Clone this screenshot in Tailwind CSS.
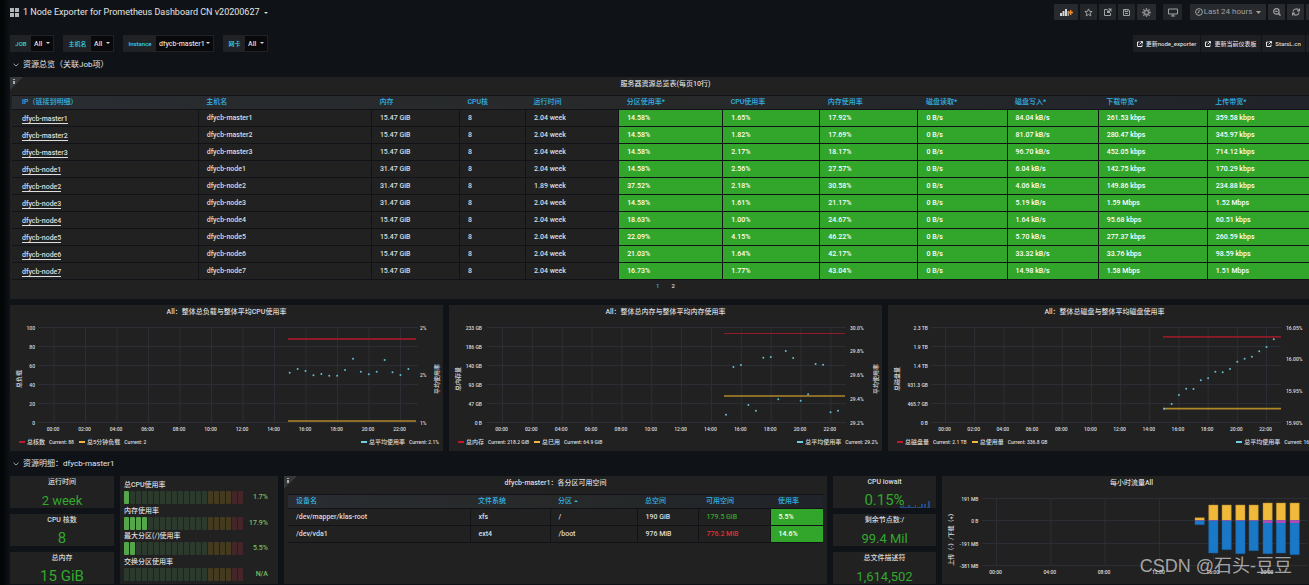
<!DOCTYPE html>
<html lang="zh-CN">
<head>
<meta charset="utf-8">
<title>1 Node Exporter for Prometheus Dashboard CN v20200627</title>
<script src="https://cdn.jsdelivr.net/npm/@tailwindcss/browser@4"></script>
</head>
<body class="overflow-hidden bg-[#0f1318] font-['Roboto','Noto_Sans_CJK_SC',sans-serif] text-[7px] leading-none text-[#dcdddf]">
<div class="-mr-3 min-h-screen bg-linear-to-r from-[#020405] to-[#0f1318] to-[10px] pl-[10px]">

  <!-- Top navigation -->
  <header class="flex h-6 items-center justify-between pr-1">
    <div class="flex items-center gap-1 pt-px">
      <svg class="size-[9px]" viewBox="0 0 9 9" fill="#b4b7ba" aria-hidden="true"><path d="M0 0h4v4H0zM5 0h4v4H5zM0 5h4v4H0zM5 5h4v4H5z"/></svg>
      <button class="flex items-center gap-1 text-[9px] text-[#e3e4e6]"><span>1 Node Exporter for Prometheus Dashboard CN v20200627</span>
        <svg class="h-[2px] w-1" viewBox="0 0 4 2" fill="#d8d9da" aria-hidden="true"><path d="M0 0h4L2 2z"/></svg></button>
    </div>
    <nav class="flex h-4 items-stretch gap-[7px] text-[#9fa1a3]" aria-label="Dashboard actions">
      <div class="flex gap-[2px]">
        <button aria-label="Add panel" class="flex w-6 items-center justify-center rounded-[1px] bg-[#282a2d]"><svg class="h-[9px] w-[14px]" viewBox="0 0 14 9"><path fill="#d5d6d7" d="M1 5h2v3H1zM3.500 3h2v5h-2zM6 1h2v7H6z"/><path fill="#9b9da0" d="M8.500 3h1.500v5H8.500z"/><path fill="#f08a24" d="M9.300 3.700h1.600V2h1.500v1.700H14v1.500h-1.600V7h-1.500V5.200H9.300z"/></svg></button>
        <button aria-label="Star" class="flex w-[17px] items-center justify-center rounded-[1px] bg-[#232629]"><svg class="size-[9px]" viewBox="0 0 9 9" fill="none" stroke="currentColor"><path d="M4.500 .9l1 2.400 2.600.2-2 1.700.7 2.700-2.300-1.400-2.300 1.400.7-2.700-2-1.700 2.600-.2z"/></svg></button>
        <button aria-label="Share" class="flex w-[17px] items-center justify-center rounded-[1px] bg-[#232629]"><svg class="size-[9px]" viewBox="0 0 9 9" fill="none" stroke="currentColor"><path d="M4.500 1.500h-3v6h6V5"/><path fill="currentColor" stroke="none" d="M5 .5h3.500V4z"/><path fill="currentColor" stroke="none" d="M4 2.500h3v2.500H4z"/></svg></button>
        <button aria-label="Save" class="flex w-[17px] items-center justify-center rounded-[1px] bg-[#232629]"><svg class="size-[9px]" viewBox="0 0 9 9" fill="none" stroke="currentColor"><path d="M1.500 1.500h5l1 1v5h-6z"/><path d="M3 1.500v2h3v-2M3 5.500h3"/></svg></button>
        <button aria-label="Settings" class="flex w-[19px] items-center justify-center rounded-[1px] bg-[#282a2d]"><svg class="size-[9px]" viewBox="0 0 9 9" fill="none" stroke="#85878a"><circle cx="4.500" cy="4.500" r="2.200" stroke-width="1.800"/><path stroke-width="1.300" d="M4.500 0v2M4.500 7v2M0 4.500h2M7 4.500h2M1.300 1.300l1.400 1.400M6.300 6.300l1.400 1.400M1.300 7.700l1.400-1.400M6.300 2.700l1.400-1.400"/></svg></button>
      </div>
      <button aria-label="Cycle view mode" class="flex w-[19px] items-center justify-center rounded-[1px] bg-[#232629]"><svg class="h-[9px] w-[10px]" viewBox="0 0 10 9" fill="none" stroke="currentColor"><path d="M.5 1h9v5h-9zM5 6v2M3 8h4"/></svg></button>
      <div class="ml-px flex gap-[2px]">
        <button class="flex w-[76px] items-center justify-center gap-[1px] rounded-[1px] bg-[#282a2d] text-[8px]"><svg class="size-[8px]" viewBox="0 0 8 8" fill="none" stroke="currentColor"><circle cx="4" cy="4" r="3.400"/><path d="M4 2v2.200l-1.500.8"/></svg><span class="whitespace-nowrap">Last 24 hours</span><svg class="ml-[3px] h-[3px] w-[5px]" viewBox="0 0 5 3" fill="currentColor"><path d="M0 0h5L2.500 3z"/></svg></button>
        <button aria-label="Zoom out" class="flex w-[17px] items-center justify-center rounded-[1px] bg-[#282a2d]"><svg class="size-[8px]" viewBox="0 0 8 8" fill="none" stroke="currentColor" stroke-width="1.200"><circle cx="3.400" cy="3.400" r="2.700"/><path d="M2.200 3.400h2.400"/><path stroke-width="1.500" d="M5.400 5.400L7.500 7.500"/></svg></button>
        <button aria-label="Refresh" class="flex w-[17px] items-center justify-center rounded-[1px] bg-[#282a2d]"><svg class="size-[8px]" viewBox="0 0 8 8" fill="none" stroke="currentColor" stroke-width="1.200"><path d="M1 3.500C1.500 .5 5.500.2 6.800 2.500M7.500.5v2.500H5M7 4.500C6.500 7.500 2.500 7.800 1.200 5.500M.5 7.500V5H3"/></svg></button>
        <button aria-label="Refresh interval" class="w-[11px] rounded-[1px] bg-[#282a2d]"></button>
      </div>
    </nav>
  </header>

  <!-- Template variables and links -->
  <section class="flex items-center justify-between pt-[11px] text-[7px]">
    <div class="flex h-[17px] gap-[9px] font-medium" id="vars"></div>
    <nav class="flex h-[17px] gap-px text-[6px] font-medium" id="links" aria-label="Links"></nav>
  </section>

  <h2 class="flex h-[25px] items-center text-[8px] text-[#e3e4e6]"><button class="flex items-center gap-1"><svg class="ml-[3px] h-1 w-[6px]" viewBox="0 0 6 4" fill="none" stroke="#9fa1a3"><path d="M.5.8L3 3 5.500.8"/></svg>资源总览（关联Job项）</button></h2>

  <!-- Server overview table -->
  <section class="relative bg-[#212121] px-[2px] pb-[10px]">
    <svg class="absolute top-0 left-0 size-[13px]" viewBox="0 0 13 13" aria-hidden="true"><path fill="#36383a" d="M0 0h13L0 13z"/><path fill="#a9abad" d="M3 2h2v1H3zM3 4h2v3H3z"/></svg>
    <h3 class="flex h-[18px] items-center justify-center pb-1 font-medium">服务器资源总览表(每页10行)</h3>
    <table class="w-full table-fixed border-collapse" id="servers"></table>
    <nav class="flex h-[9px] items-end justify-center gap-3 text-[6px] font-medium" aria-label="Pages"><a href="#" class="text-[#33b5e5]">1</a><a href="#">2</a></nav>
  </section>

  <!-- Overall graphs -->
  <section class="mt-[6px] grid grid-cols-3 gap-[6px]" id="graphs"></section>

  <h2 class="flex h-[25px] items-center text-[8px] text-[#e3e4e6]"><button class="flex items-center gap-1"><svg class="ml-[3px] h-1 w-[6px]" viewBox="0 0 6 4" fill="none" stroke="#9fa1a3"><path d="M.5.8L3 3 5.500.8"/></svg>资源明细：dfycb-master1</button></h2>

  <!-- Host detail -->
  <section class="grid grid-cols-[104fr_158fr_543fr_103fr_379fr] gap-[6px]">
    <div class="flex flex-col gap-[6px] text-center text-[#32a82c]">
      <div class="h-8 bg-[#212121] pt-[3px]"><h3 class="font-medium text-[#dcdddf]">运行时间</h3><p class="pt-[8px] text-[13px]">2 week</p></div>
      <div class="h-8 bg-[#212121] pt-[3px]"><h3 class="font-medium text-[#dcdddf]">CPU 核数</h3><p class="pt-[7px] text-[15px]">8</p></div>
      <div class="h-8 bg-[#212121] pt-[3px]"><h3 class="font-medium text-[#dcdddf]">总内存</h3><p class="pt-[7px] text-[15px]">15 GiB</p></div>
    </div>
    <div class="flex flex-col justify-between bg-[#212121] px-1 pt-[6px] pb-[3px]" id="gauges"></div>
    <div class="relative bg-[#212121] px-1">
      <svg class="absolute top-0 left-0 size-[13px]" viewBox="0 0 13 13" aria-hidden="true"><path fill="#36383a" d="M0 0h13L0 13z"/><path fill="#a9abad" d="M3 2h2v1H3zM3 4h2v3H3z"/></svg>
      <h3 class="flex h-[18px] items-center justify-center pb-1 font-medium">dfycb-master1：各分区可用空间</h3>
      <table class="w-full table-fixed border-collapse" id="disks"></table>
    </div>
    <div class="flex flex-col gap-[6px] text-center text-[#32a82c]">
      <div class="relative h-8 bg-[#212121] pt-[3px]">
        <svg class="absolute right-1 bottom-0 h-[8px] w-8" viewBox="0 0 32 8" fill="#214a86" aria-hidden="true"><path d="M0 8V6h2v1h1V5h1v2h4V5h2v2h5V5h1v3h1V7h4V4h2v4h1V4h2v4h1V7h1V1h2v7z"/></svg>
        <h3 class="font-medium text-[#dcdddf]">CPU iowait</h3><p class="relative pt-[7px] text-[15px]">0.15%</p></div>
      <div class="h-8 bg-[#212121] pt-[3px]"><h3 class="font-medium text-[#dcdddf]">剩余节点数:/</h3><p class="pt-[8px] text-[13px]">99.4 Mil</p></div>
      <div class="h-8 bg-[#212121] pt-[3px]"><h3 class="font-medium text-[#dcdddf]">总文件描述符</h3><p class="pt-[8px] text-[13px]">1,614,502</p></div>
    </div>
    <div class="bg-[#212121]">
      <h3 class="flex h-[14px] items-center justify-center font-medium">每小时流量All</h3>
      <div id="traffic"></div>
    </div>
  </section>
</div>
<div class="pointer-events-none absolute right-[17px] bottom-[10px] font-['Liberation_Sans','Noto_Sans_CJK_SC',sans-serif] text-[18px] text-[#c8c8c8]/80">CSDN @石头-豆豆</div>

<script>
const $ = id => document.getElementById(id);

$('vars').innerHTML = [['JOB','All','w-5','w-[22px]'],['主机名','All','w-[27px]','w-[22px]'],['Instance','dfycb-master1','w-8','w-[57px]'],['网卡','All','w-[21px]','w-[22px]']]
  .map(([l,v,a,b],i) => `<div class="flex border border-[#202226]"><label for="v${i}" class="${a} flex items-center justify-center bg-[#202226] text-[6px] text-[#33d6e5]">${l}</label><div class="${b} relative flex bg-[#09090b]"><select id="v${i}" class="w-full appearance-none pt-[2px] pl-[3px] text-[7px] outline-none"><option>${v}</option></select><svg class="pointer-events-none absolute top-[6px] right-[3px] h-[2px] w-1" viewBox="0 0 4 2" fill="#d8d9da"><path d="M0 0h4L2 2z"/></svg></div></div>`).join('');

$('links').innerHTML = [['更新node_exporter','w-[67px]'],['更新当前仪表板','w-[60px]'],['StarsL.cn','w-[43px]'],['','w-[15px]']]
  .map(([t,w]) => `<a href="#" class="${w} flex items-center justify-center gap-[3px] whitespace-nowrap bg-[#1d1f22]">${t ? '<svg class="size-[6px] shrink-0" viewBox="0 0 6 6" fill="none" stroke="#e3e4e6"><path d="M2.500 1H.5v4.500H5V3.500M2.500 3.500L5 1M3.500.5h2v2"/></svg>' : ''}${t}</a>`).join('');

function table(id, widths, heads, rows, cell) {
  const sum = widths.reduce((a, b) => a + b);
  $(id).innerHTML = `<colgroup>${widths.map(w => `<col style="width:${w / sum * 100}%">`).join('')}</colgroup>
  <thead><tr class="h-[14px] border-y border-[#111318] bg-linear-to-r from-[#292c31] via-[#272929] to-[#20242a] text-left text-[#33b5e5]">${heads.map(h => `<th scope="col" class="p-0 pl-2 font-medium">${h}</th>`).join('')}</tr></thead>
  <tbody>${rows.map(r => `<tr class="h-[17px] border-b border-[#111318]">${r.map(cell).join('')}</tr>`).join('')}</tbody>`;
}
const raw = `dfycb-master1|15.47 GiB|2.04 week|14.58%|1.65%|17.92%|84.04 kB/s|261.53 kbps|359.58 kbps
dfycb-master2|15.47 GiB|2.04 week|14.58%|1.82%|17.69%|81.07 kB/s|280.47 kbps|345.97 kbps
dfycb-master3|15.47 GiB|2.04 week|14.58%|2.17%|18.17%|96.70 kB/s|452.05 kbps|714.12 kbps
dfycb-node1|31.47 GiB|2.04 week|14.58%|2.56%|27.57%|6.04 kB/s|142.75 kbps|170.29 kbps
dfycb-node2|31.47 GiB|1.89 week|37.52%|2.18%|30.58%|4.06 kB/s|149.86 kbps|234.88 kbps
dfycb-node3|31.47 GiB|2.04 week|14.58%|1.61%|21.17%|5.19 kB/s|1.59 Mbps|1.52 Mbps
dfycb-node4|15.47 GiB|2.04 week|18.63%|1.00%|24.67%|1.64 kB/s|95.68 kbps|60.51 kbps
dfycb-node5|15.47 GiB|2.04 week|22.09%|4.15%|46.22%|5.70 kB/s|277.37 kbps|260.59 kbps
dfycb-node6|15.47 GiB|2.04 week|21.03%|1.64%|42.17%|33.32 kB/s|33.76 kbps|98.59 kbps
dfycb-node7|15.47 GiB|2.04 week|16.73%|1.77%|43.04%|14.98 kB/s|1.58 Mbps|1.51 Mbps`;
const rows = raw.split('\n').map(l => { const c = l.split('|'); return [c[0], c[0], c[1], '8', c[2], c[3], c[4], c[5], '0 B/s', c[6], c[7], c[8]]; });
table('servers', [186,173,88,66,93,104,97,98,89,91,109,111],
  ['<span class="pl-[2px]">IP（链接到明细）</span>','主机名','内存','CPU核','运行时间','分区使用率*','CPU使用率','内存使用率','磁盘读取*','磁盘写入*','下载带宽*','上传带宽*'], rows,
  (v, i) => i === 0 ? `<td class="border-r border-[#111318] p-0 pt-[2px] pl-[10px]"><a href="#" class="border-b border-[#dcdddf] font-medium">${v}</a></td>`
    : i < 5 ? `<td class="border-r border-[#111318] p-0 pl-2 font-medium">${v}</td>`
    : `<td class="border-r border-[#111318] bg-[#32a62a] p-0 pl-2 font-medium text-white">${v}</td>`);
table('disks', [182,80,87,61,72,53], ['设备名','文件系统','分区 <svg class="inline h-[2px] w-1 align-middle" viewBox="0 0 4 2" fill="#33b5e5"><path d="M0 2h4L2 0z"/></svg>','总空间','可用空间','使用率'],
  [['/dev/mapper/klas-root','xfs','/','190 GiB','179.5 GiB','5.5%'],['/dev/vda1','ext4','/boot','976 MiB','776.2 MiB','14.6%']],
  (v, i) => i === 5 ? `<td class="bg-[#32a62a] p-0 pl-2 font-medium text-white">${v}</td>`
    : i === 4 ? `<td class="border-r border-[#111318] p-0 pl-2 font-medium ${v[0] === '1' ? 'text-[#32a62a]' : 'text-[#e02f2f]'}">${v}</td>`
    : `<td class="border-r border-[#111318] p-0 pl-2 font-medium">${v}</td>`);

const bar = (n, lit) => n < lit ? 'bg-[#55a64b]' : n < 14 ? 'bg-[#2c3a2d]' : n < 18 ? 'bg-[#433a20]' : 'bg-[#452628]';
$('gauges').innerHTML = [['总CPU使用率','1.7%',1],['内存使用率','17.9%',4],['最大分区(/)使用率','5.5%',2],['交换分区使用率','N/A',0]]
  .map(([t, v, lit]) => `<div><h3 class="font-medium">${t}</h3><div class="mt-[2px] flex h-[13px] items-center"><div class="flex h-full flex-1 gap-px">${Array.from({length: 20}, (_, n) => `<i class="flex-1 rounded-[1px] ${bar(n, lit)}"></i>`).join('')}</div><span class="w-[31px] pr-[6px] text-right font-medium text-[#73bf69]">${v}</span></div></div>`).join('');

const txt = (x, y, s, anchor, size = 5) => `<text x="${x}" y="${y}" text-anchor="${anchor}" dominant-baseline="central" font-size="${size}">${s}</text>`;
const vert = (x, y, s) => `<text transform="translate(${x} ${y}) rotate(-90)" text-anchor="middle" dominant-baseline="central" font-size="6">${s}</text>`;
function plot(c) {
  let s = `<svg class="block h-auto w-full font-medium" viewBox="0 0 ${c.w} ${c.h}" fill="#dcdddf" role="img" aria-label="${c.title}"><g stroke="#2b2f35">`;
  c.gy.forEach(y => s += `<path d="M${c.x0} ${y}H${c.x1}"/>`);
  c.times.forEach((t, i) => s += `<path d="M${c.gx + c.step * i} ${c.gy[0]}V${c.gy[c.gy.length - 1]}"/>`);
  s += '</g>';
  c.left.forEach((l, i) => s += txt(c.lx, c.gy[i], l, 'end'));
  (c.right || []).forEach((l, i) => s += txt(c.rx, c.gy[0] + i * 95 / (c.right.length - 1), l, 'start'));
  c.times.forEach((t, i) => s += txt(c.gx + c.step * i - 1, c.ty, t, 'middle'));
  s += vert(8, c.ly, c.lt) + (c.rt ? vert(426, 59, c.rt) : '');
  return s + (c.marks || '') + '</svg>';
}
const hours = [0,2,4,6,8,10,12,14,16,18,20,22].map(h => String(h).padStart(2, '0') + ':00');
const gy = [7.5,26.5,45.5,64.5,83.5,102.5];
const series = g => `<path stroke="#8f1a28" stroke-width="${g.rw}" d="M${g.s0} ${g.red}H${g.s1}"/><path stroke="#b0872b" stroke-width="1.700" d="M${g.s0} ${g.yel}H${g.s1}"/>` + g.pts.map((y, i) => `<circle cx="${g.p0 + g.ps * i}" cy="${y}" r="1" fill="#65bdd0"/>`).join('');
$('graphs').innerHTML = [
 {title:'All：整体总负载与整体平均CPU使用率', left:[100,80,60,40,20,0], right:['2%','2%','1%'], lt:'总负载', x0:28, x1:408, gx:44, step:31.5, lx:25, rx:410,
  rw:1.8, s0:278, s1:406, red:19, yel:101, p0:279.7, ps:7.91, pts:[52.7,49,51,55.3,54,55.7,55.7,50,38.7,51.7,54.3,51.7,40,52.3,55,49], leg:[['总核数','88'],['总5分钟负载','2'],['总平均使用率','2.1%']]},
 {title:'All：整体总内存与整体平均内存使用率', left:['233 GB','186 GB','140 GB','93 GB','47 GB','0 B'], right:['30.0%','29.8%','29.6%','29.4%','29.2%'], lt:'总内存量', x0:38, x1:397, gx:53.5, step:29.85, lx:33, rx:401,
  rw:1, s0:275, s1:396, red:13.5, yel:76, p0:277, ps:7.467, pts:[94.7,47,45,85,90.7,37.7,37,79.3,31,38,80.7,74.3,44,44.7,92.3,90.7], leg:[['总内存','218.2 GiB'],['总已用','64.9 GiB'],['总平均使用率','29.2%']]},
 {title:'All：整体总磁盘与整体平均磁盘使用率', left:['2.3 TB','1.9 TB','1.4 TB','931.3 GB','465.7 GB','0 B'], right:['16.05%','16.00%','15.95%','15.90%'], lt:'总磁盘量', x0:43, x1:393, gx:57.5, step:29.18, lx:40, rx:398,
  rw:1.8, s0:275, s1:393, red:16.8, yel:88.7, p0:276.3, ps:7.3, pts:[88.7,84,75,68.7,69,60.3,58.3,51.7,52.3,49,41.7,38.7,36.7,31.3,27,19.3], leg:[['总磁盘量','2.1 TB'],['总使用量','336.8 GB'],['总平均使用率','16.0%']]}
].map(g => {
  const key = (k, color) => `<span class="flex items-center gap-[2px] whitespace-nowrap"><i class="h-[2px] w-[6px] ${color}"></i><span>${k[0]}</span><span class="pl-[2px] text-[5px]">Current: ${k[1]}</span></span>`;
  return `<article class="bg-[#212121]"><h3 class="flex h-[15px] items-center justify-center font-medium">${g.title}</h3>
  ${plot({...g, w:433, h:115, gy, times:hours, ty:109, ly:59, rt: g.lt === '总磁盘量' ? '' : '平均使用率', marks: series(g)})}
  <div class="flex h-4 items-center gap-[5px] pr-1 pb-[2px] pl-[9px] text-[6px] font-medium">${key(g.leg[0], 'bg-[#c4162a]')}${key(g.leg[1], 'bg-[#f2b63c]')}<span class="ml-auto">${key(g.leg[2], 'bg-[#6ed0e0]')}</span></div></article>`;
}).join('');

const hourly = [[253,27.7,34.7],[266.7,15,63],[280,15,59.7],[293.7,15,63.7],[307,15,60.7],[321,13,63.7],[334.3,13,63],[348,13,64.7]];
$('traffic').innerHTML = plot({title:'每小时流量All', w:379, h:94, x0:40, x1:366, gx:54.5, step:54.3, gy:[8.5,30.5,53.5,75.5], lx:36.5, ty:82, ly:48, lt:'上传（-）/下载（+）',
  left:['191 MB','0 B','-191 MB','-381 MB'], times:['00:00','04:00','08:00','12:00','16:00','20:00'],
  marks: hourly.map(([x, t, b], i) => `<path fill="#f0b93a" stroke="#a5822d" stroke-width=".5" d="M${x} ${t}h9.300V30.500h-9.300z"/><path fill="#1a78c8" stroke="#15609f" stroke-width=".5" d="M${x} 30.500h9.300V${b}h-9.300z"/><path fill="#b14ab5" d="M${x} 30.200h9.300v${i > 4 ? 2.8 : 0.6}h-9.300z"/>`).join('')});
</script>
</body>
</html>
